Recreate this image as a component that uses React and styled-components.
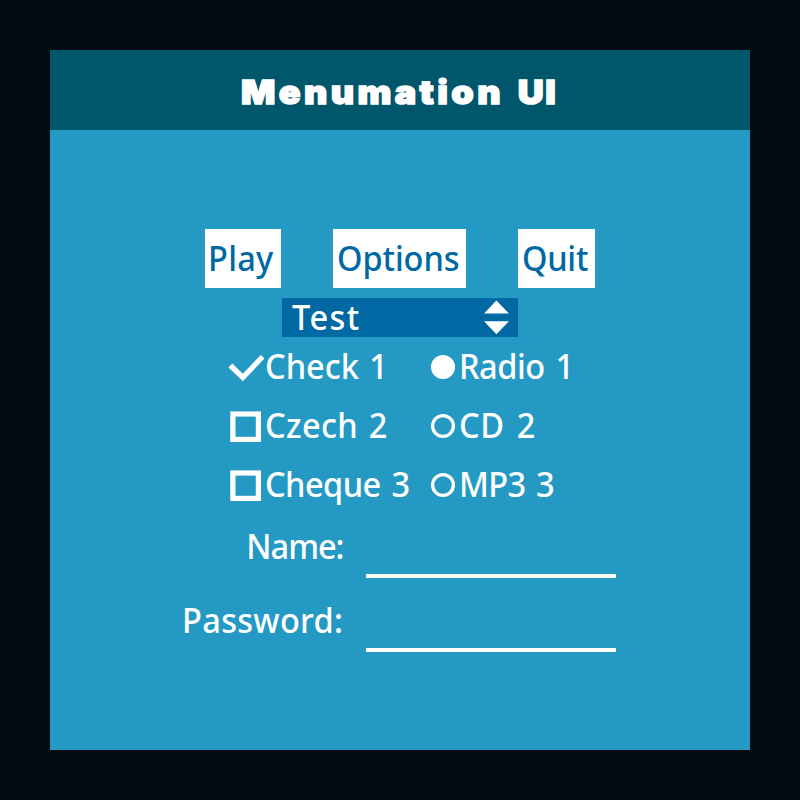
import React from "react";
import styled, { createGlobalStyle } from "styled-components";

const GlobalStyle = createGlobalStyle`
  body { margin: 0; background: #000c11; }
  * { box-sizing: border-box; }
`;

const Screen = styled.main`
  width: 800px;
  height: 800px;
  padding: 50px;
  overflow: hidden;
  background: #000c11;
  color: #fff;
  font: 500 35px "Noto Sans", "Open Sans", sans-serif;
`;

const Panel = styled.section`
  display: flex;
  flex-direction: column;
  width: 700px;
  height: 700px;
  background: #2399c4;
`;

const TitleBar = styled.header`
  display: flex;
  height: 80px;
  padding-left: 191px;
  background: #00566b;
`;

const Title = styled.h1`
  display: flex;
  margin: 0;
  font: 900 33px/84px Inter, sans-serif;
  -webkit-text-stroke: 1.4px #fff;
  transform: scaleX(1.09);
  transform-origin: left;
`;

const TitleWord = styled.span`
  width: ${(p) => p.$width}px;
  letter-spacing: ${(p) => p.$spacing}px;
  white-space: nowrap;
`;

const Text = styled.span`
  display: block;
  white-space: nowrap;
  letter-spacing: ${(p) => p.$spacing || 0}px;
  word-spacing: ${(p) => p.$gap ?? 4}px;
  transform: scaleX(0.93);
  transform-origin: ${(p) => p.$origin || "left"};
`;

const ButtonRow = styled.nav`
  display: flex;
  justify-content: center;
  gap: 52px;
  margin-top: 99px;
`;

const Button = styled.button`
  width: ${(p) => p.$width}px;
  height: 59px;
  padding: 0 0 0 ${(p) => p.$inset}px;
  border: 0;
  background: #fff;
  color: #0069a3;
  font: inherit;
  line-height: 57px;
  text-align: left;
  display: flex;
  align-items: flex-start;
`;

const Select = styled.div`
  display: flex;
  justify-content: space-between;
  width: 236px;
  height: 39px;
  margin: 10px auto 0;
  padding: 0 8px 0 10px;
  background: #0069a3;
  line-height: 37px;
`;

const Choices = styled.div`
  display: grid;
  grid-template-columns: 202px 200px;
  grid-auto-rows: 59px;
  padding-left: 178px;
`;

const Choice = styled.div`
  display: grid;
  grid-template-columns: ${(p) => p.$icon}px 1fr;
  line-height: 57px;
`;

const Field = styled.div`
  display: grid;
  grid-template-columns: 293px 250px;
  column-gap: 23px;
  height: ${(p) => p.$height}px;
  align-items: end;
`;

const FieldLabel = styled.label`
  display: flex;
  justify-content: flex-end;
  height: 64px;
  line-height: 64px;
`;

const Input = styled.input`
  width: 250px;
  height: 64px;
  padding: 0;
  border: 0;
  border-bottom: 4px solid #fff;
  background: transparent;
  color: inherit;
  font: inherit;
  outline: 0;
`;

const CheckIcon = ({ on }) => (
  <svg width="37" height="59" viewBox="0 0 37 59">
    {on ? (
      <path d="M.5 30.6 4.3 26.6 14.8 36.8 32.8 18 36.4 21.6 14.9 44.2Z" fill="#fff" />
    ) : (
      <rect x="4.9" y="18" width="25.5" height="25.4" fill="none" stroke="#fff" strokeWidth="5.2" />
    )}
  </svg>
);

const RadioIcon = ({ on }) => (
  <svg width="26" height="59" viewBox="0 0 26 59">
    <circle cx="13" cy="30" r="10.4" fill={on ? "#fff" : "none"} stroke="#fff" strokeWidth="3.3" />
  </svg>
);

const choices = [
  { check: "Check 1", checkSpacing: 0, checkGap: 2, radio: "Radio 1", radioSpacing: -0.5, radioGap: 3 },
  { check: "Czech 2", checkSpacing: 0.4, checkGap: 2, radio: "CD 2", radioSpacing: 0.6, radioGap: 3.5 },
  { check: "Cheque 3", checkSpacing: -0.6, checkGap: 3, radio: "MP3 3", radioSpacing: -0.7, radioGap: 3 },
];

export default function App() {
  return (
    <Screen>
      <GlobalStyle />
      <Panel>
        <TitleBar>
          <Title>
            <TitleWord $width={254} $spacing={3.1}>Menumation</TitleWord>
            <TitleWord $spacing={1.4}>UI</TitleWord>
          </Title>
        </TitleBar>
        <ButtonRow>
          <Button $width={76} $inset={3}><Text $spacing={0.3}>Play</Text></Button>
          <Button $width={133} $inset={4}><Text $spacing={-0.1}>Options</Text></Button>
          <Button $width={77} $inset={4}><Text $spacing={-0.3}>Quit</Text></Button>
        </ButtonRow>
        <Select>
          <Text $spacing={1.5}>Test</Text>
          <svg width="27" height="39" viewBox="0 0 27 39">
            <path d="M13.4 2.5 26 15.5H1ZM1 23.3H26L13.4 36.2Z" fill="#fff" />
          </svg>
        </Select>
        <Choices>
          {choices.map((c, i) => (
            <React.Fragment key={c.check}>
              <Choice $icon={37}>
                <CheckIcon on={i === 0} />
                <Text $spacing={c.checkSpacing} $gap={c.checkGap}>{c.check}</Text>
              </Choice>
              <Choice $icon={29}>
                <RadioIcon on={i === 0} />
                <Text $spacing={c.radioSpacing} $gap={c.radioGap}>{c.radio}</Text>
              </Choice>
            </React.Fragment>
          ))}
        </Choices>
        <Field $height={64}>
          <FieldLabel htmlFor="name"><Text $origin="right" $spacing={-1.1}>Name:</Text></FieldLabel>
          <Input id="name" />
        </Field>
        <Field $height={74}>
          <FieldLabel htmlFor="password"><Text $origin="right" $spacing={0.3}>Password:</Text></FieldLabel>
          <Input id="password" type="password" />
        </Field>
      </Panel>
    </Screen>
  );
}
